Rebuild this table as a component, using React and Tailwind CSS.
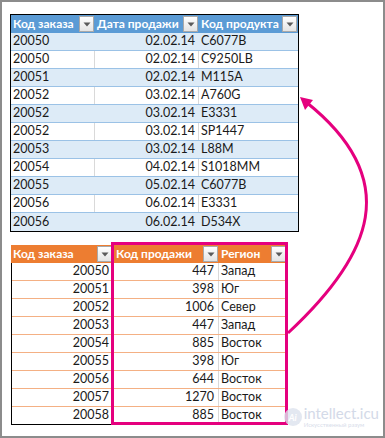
const ordersTop = [
  ['20050', '02.02.14', 'C6077B'],
  ['20050', '02.02.14', 'C9250LB'],
  ['20051', '02.02.14', 'M115A'],
  ['20052', '03.02.14', 'A760G'],
  ['20052', '03.02.14', 'E3331'],
  ['20052', '03.02.14', 'SP1447'],
  ['20053', '03.02.14', 'L88M'],
  ['20054', '04.02.14', 'S1018MM'],
  ['20055', '05.02.14', 'C6077B'],
  ['20056', '06.02.14', 'E3331'],
  ['20056', '06.02.14', 'D534X'],
];

const sales = [
  ['20050', '447', 'Запад'],
  ['20051', '398', 'Юг'],
  ['20052', '1006', 'Север'],
  ['20053', '447', 'Запад'],
  ['20054', '885', 'Восток'],
  ['20055', '398', 'Юг'],
  ['20056', '644', 'Восток'],
  ['20057', '1270', 'Восток'],
  ['20058', '885', 'Восток'],
];

function FilterButton() {
  return (
    <span className="flex h-[16px] w-[15px] shrink-0 items-center justify-center border border-[#a9a9a9] bg-gradient-to-b from-white to-[#e4e4e4]">
      <svg width="8" height="5" viewBox="0 0 8 5">
        <path d="M0.5 0.5 L7.5 0.5 L4 4.5 Z" fill="#5a5a5a" />
      </svg>
    </span>
  );
}

function HeaderCell({ label, className }) {
  return (
    <div className={`flex items-center justify-between pl-[2px] pr-[1px] ${className}`}>
      <span className="whitespace-nowrap text-[12px] font-bold text-white">{label}</span>
      <FilterButton />
    </div>
  );
}

export default function App() {
  return (
    <div
      className="relative h-[438px] w-[385px] overflow-hidden border-2 border-[#8c8c8c] bg-white pl-[8px] pt-[12px] text-[12.5px] leading-none text-[#1a1a1a]"
      style={{ fontFamily: 'Lato, "Liberation Sans", sans-serif' }}
    >
      {/* top table */}
      <div className="w-[289px] border border-black">
        <div className="grid h-[18px] grid-cols-[84px_104px_99px] bg-[#5b9bd5]">
          <HeaderCell label="Код заказа" />
          <HeaderCell label="Дата продажи" />
          <HeaderCell label="Код продукта" />
        </div>
        {ordersTop.map((row, i) => {
          const blue = i % 2 === 0;
          const last = i === ordersTop.length - 1;
          return (
            <div
              key={i}
              className={`grid h-[18px] grid-cols-[84px_104px_99px] ${blue ? 'bg-[#ddebf7]' : 'bg-white'} ${last ? '' : 'border-b border-[#9bc2e6]'}`}
            >
              <div className={`flex items-center border-r pl-[2px] ${blue ? 'border-transparent' : 'border-[#d9d9d9]'}`}>{row[0]}</div>
              <div className={`flex items-center justify-end border-r pr-[3px] ${blue ? 'border-transparent' : 'border-[#d9d9d9]'}`}>{row[1]}</div>
              <div className="flex items-center pl-[2px]">{row[2]}</div>
            </div>
          );
        })}
      </div>

      {/* bottom table */}
      <div className="ml-[1px] mt-[13px] w-[276px]">
        <div className="grid h-[18px] grid-cols-[102px_106px_68px] bg-[#ed7d31]">
          <HeaderCell label="Код заказа" />
          <HeaderCell label="Код продажи" className="pl-[3px]" />
          <HeaderCell label="Регион" />
        </div>
        <div className="border-l border-black">
          {sales.map((row, i) => {
            const last = i === sales.length - 1;
            return (
              <div
                key={i}
                className={`grid h-[18px] grid-cols-[101px_106px_68px] border-b ${last ? 'border-black' : 'border-[#f4b084]'}`}
              >
                <div className="flex items-center justify-end border-r border-[#d9d9d9] pr-[3px]">{row[0]}</div>
                <div className="flex items-center justify-end border-r border-[#d9d9d9] pr-[4px]">{row[1]}</div>
                <div className="flex items-center pl-[2px]">{row[2]}</div>
              </div>
            );
          })}
        </div>
      </div>

      {/* annotation overlay */}
      <svg className="pointer-events-none absolute -left-[2px] -top-[2px]" width="385" height="438" viewBox="0 0 385 438">
        <rect x="112.5" y="243.5" width="174" height="180" fill="none" stroke="#e5007e" strokeWidth="3" />
        <path d="M288 333 C372 255 404 180 306 102" fill="none" stroke="#e5007e" strokeWidth="3" />
        <path d="M300 97 L313 100 L305 110 Z" fill="#e5007e" />
      </svg>

      {/* watermark */}
      <div className="pointer-events-none absolute bottom-[8px] right-[4px] flex items-center gap-[2px] opacity-80">
        <div className="flex h-[18px] w-[18px] items-center justify-center rounded-full bg-[#dde3ee] text-[9px] font-bold italic text-white">
          Ai
        </div>
        <div className="flex flex-col">
          <span className="text-[15px] leading-[15px] text-[#c9d1e3]">intellect.icu</span>
          <span className="text-[6px] leading-[7px] text-[#cfd6e6]">Искусственный разум</span>
        </div>
      </div>
    </div>
  );
}
